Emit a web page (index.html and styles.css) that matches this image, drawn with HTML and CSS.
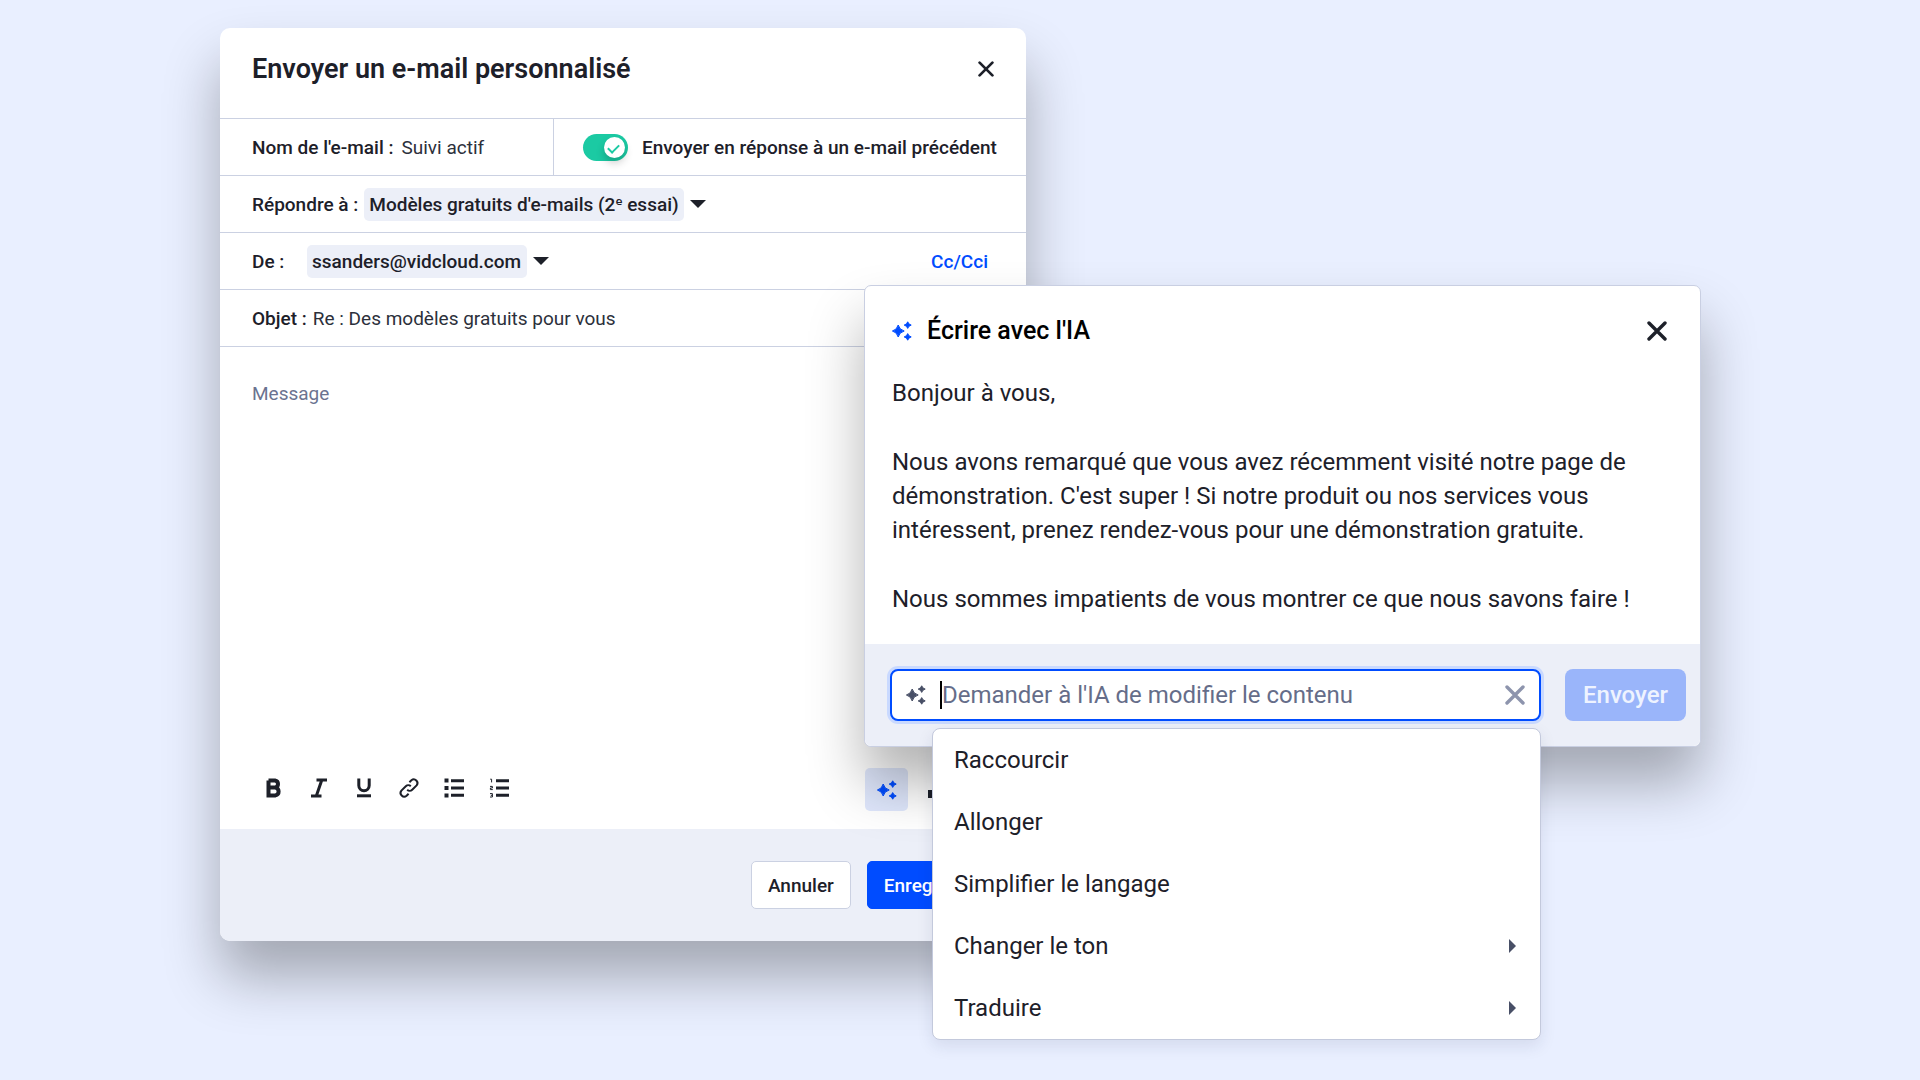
FILE: index.html
```
<!DOCTYPE html>
<html lang="fr">
  <head>
    <meta charset="UTF-8">
    <meta name="viewport" content="width=device-width, initial-scale=1">
    <title>Envoyer un e-mail personnalisé</title>
    <link rel="stylesheet" href="styles.css">
  </head>
  <body>
    <!-- shared icons -->
    <svg class="sprite" aria-hidden="true">
      <symbol id="sparkles" viewBox="0 0 20 20">
        <path d="M6.2 4 Q7.4 8.8 12.2 10 Q7.4 11.2 6.2 16 Q5 11.2 0.4 10 Q5 8.8 6.2 4Z"/>
        <path d="M15.7 0.8 Q16.4 3.4 19.2 4.1 Q16.4 4.8 15.7 7.4 Q15 4.8 12.2 4.1 Q15 3.4 15.7 0.8Z"/>
        <path d="M15.7 12.6 Q16.4 15.2 19.2 15.9 Q16.4 16.6 15.7 19.2 Q15 16.6 12.2 15.9 Q15 15.2 15.7 12.6Z"/>
      </symbol>
      <symbol id="cross" viewBox="0 0 20 20">
        <path d="M2 2L18 18M18 2L2 18"/>
      </symbol>
    </svg>

    <main class="stage">
      <form class="dialog">
        <header class="dialog-head">
          <h1 class="dialog-title">Envoyer un e-mail personnalisé</h1>
          <button type="button" class="icon-button" aria-label="Fermer"><svg class="cross cross-sm"><use href="#cross"/></svg></button>
        </header>

        <div class="row row-split">
          <div class="cell">
            <label class="label" for="mail-name">Nom de l'e-mail :</label>
            <input class="field" id="mail-name" type="text" value="Suivi actif">
          </div>
          <div class="cell cell-switch">
            <input class="switch" id="as-reply" type="checkbox" checked>
            <label class="label" for="as-reply">Envoyer en réponse à un e-mail précédent</label>
          </div>
        </div>
        <div class="row">
          <label class="label" for="reply-to">Répondre à :</label>
          <select class="chip" id="reply-to"><option>Modèles gratuits d'e-mails (2ᵉ essai)</option></select>
          <span class="caret"></span>
        </div>
        <div class="row">
          <label class="label label-from" for="from">De :</label>
          <select class="chip" id="from"><option>ssanders@vidcloud.com</option></select>
          <span class="caret"></span>
          <a class="cc-link" href="#">Cc/Cci</a>
        </div>
        <div class="row">
          <label class="label" for="subject">Objet :</label>
          <input class="field" id="subject" type="text" value="Re : Des modèles gratuits pour vous">
        </div>

        <textarea class="message" placeholder="Message" aria-label="Message"></textarea>

        <div class="toolbar">
          <button type="button" class="tool" aria-label="Gras">
            <svg viewBox="0 0 20 20"><path class="w4" d="M4.5 2.5H11A3.6 3.6 0 0 1 11 9.6H4.5M4.5 9.6H11.5A4 4 0 0 1 11.5 17.4H4.5V2.5"/></svg>
          </button>
          <button type="button" class="tool" aria-label="Italique">
            <svg viewBox="0 0 20 20"><path class="w3" d="M7.5 2H18M2 18H12.5M12.8 2L7.3 18"/></svg>
          </button>
          <button type="button" class="tool" aria-label="Souligné">
            <svg viewBox="0 0 20 20"><path class="w3" d="M4.8 0.5V7.5A5.2 5.2 0 0 0 15.2 7.5V0.5"/><path class="w3" d="M3 17.8H17"/></svg>
          </button>
          <button type="button" class="tool" aria-label="Lien">
            <svg viewBox="0 0 20 20"><path class="w2" d="M8.2 11.8A3.6 3.6 0 0 0 13.2 11.8L17.6 7.4A3.7 3.7 0 0 0 12.4 2.2L10.4 4.2M11.8 8.2A3.6 3.6 0 0 0 6.8 8.2L2.4 12.6A3.7 3.7 0 0 0 7.6 17.8L9.6 15.8"/></svg>
          </button>
          <button type="button" class="tool" aria-label="Liste à puces">
            <svg viewBox="0 0 20 20"><path class="w3" d="M7 2.8H20M7 10H20M7 17.2H20"/><path class="w4" d="M0.5 2.4H4.5M0.5 10H4.5M0.5 17.4H4.5"/></svg>
          </button>
          <button type="button" class="tool" aria-label="Liste numérotée">
            <svg viewBox="0 0 20 20"><path class="w3" d="M7 2.8H20M7 10H20M7 17.2H20"/><path class="w1" d="M1.2 1.2H2.6V4.4M1 8.4H3.4V10H1.4V11.6H3.8M1 15.6H3.4V19H1M1.8 17.3H3.4"/></svg>
          </button>
          <button type="button" class="tool tool-ai" aria-label="Écrire avec l'IA"><svg class="sparkles"><use href="#sparkles"/></svg></button>
          <button type="button" class="tool tool-chart" aria-label="Statistiques">
            <svg viewBox="0 0 20 20"><path class="w4" d="M2 12V20M10 7V20M18 2V20"/></svg>
          </button>
        </div>

        <footer class="dialog-foot">
          <button type="button" class="button">Annuler</button>
          <button type="submit" class="button button-primary">Enregistrer</button>
        </footer>
      </form>

      <section class="ai">
        <header class="ai-head">
          <svg class="sparkles"><use href="#sparkles"/></svg>
          <h2 class="ai-title">Écrire avec l'IA</h2>
          <button type="button" class="icon-button" aria-label="Fermer"><svg class="cross"><use href="#cross"/></svg></button>
        </header>
        <div class="ai-text">
          <p>Bonjour à vous,</p>
          <p>Nous avons remarqué que vous avez récemment visité notre page de<br>démonstration. C'est super ! Si notre produit ou nos services vous<br>intéressent, prenez rendez-vous pour une démonstration gratuite.</p>
          <p>Nous sommes impatients de vous montrer ce que nous savons faire !</p>
        </div>
        <footer class="ai-foot">
          <div class="prompt">
            <svg class="sparkles"><use href="#sparkles"/></svg>
            <span class="text-cursor"></span>
            <input class="prompt-input" type="text" placeholder="Demander à l'IA de modifier le contenu" aria-label="Demander à l'IA de modifier le contenu">
            <button type="button" class="icon-button" aria-label="Effacer"><svg class="cross"><use href="#cross"/></svg></button>
            <div class="menu">
              <button type="button" class="menu-item">Raccourcir</button>
              <button type="button" class="menu-item">Allonger</button>
              <button type="button" class="menu-item">Simplifier le langage</button>
              <button type="button" class="menu-item has-sub">Changer le ton</button>
              <button type="button" class="menu-item has-sub">Traduire</button>
            </div>
          </div>
          <button type="button" class="send" disabled>Envoyer</button>
        </footer>
      </section>
    </main>
  </body>
</html>
```
FILE: styles.css
```
* {
  box-sizing:border-box;
}
body {
  margin:0;
  min-height:100vh;
  background-color:#e9efff;
  font-family:Roboto, "Noto Sans", sans-serif;
  font-size:19px;
  color:#1d2029;
}
button, input, select, textarea {
  font:inherit;
  color:inherit;
  border:0;
  margin:0;
  padding:0;
  background:none;
}
button {
  cursor:pointer;
}
h1, h2, p {
  margin:0;
}
.sprite {
  position:absolute;
  width:0;
  height:0;
}
/* the two windows share the middle column, the second one on top */
.stage {
  display:grid;
  grid-template-columns:220fr 644fr 162fr 675fr 219fr;
  align-items:start;
  padding:28px 0;
}

/* mail dialog */
.dialog {
  grid-column:2 / 4;
  grid-row:1;
  border-radius:10px;
  background-color:#fff;
  box-shadow:0 36px 56px rgba(0,0,0,0.3);
}
.dialog-head {
  display:flex;
  align-items:center;
  justify-content:space-between;
  height:90px;
  padding:0 32px 8px;
}
.dialog-title {
  font-size:27px;
  font-weight:600;
}
.icon-button {
  display:flex;
}
.cross {
  width:20px;
  height:20px;
  stroke:currentColor;
  stroke-width:3.4;
  stroke-linecap:round;
}
.cross-sm {
  width:16px;
  height:16px;
}
.row {
  display:flex;
  align-items:center;
  gap:6px;
  height:57px;
  padding:0 38px 0 32px;
  border-top:1px solid #cbd1e2;
}
.row-split {
  display:grid;
  grid-template-columns:333fr 473fr;
  gap:0;
  padding:0;
}
.cell {
  display:flex;
  align-items:center;
  gap:8px;
  height:100%;
  min-width:0;
  padding-left:32px;
}
.cell-switch {
  gap:14px;
  padding-left:29px;
  border-left:1px solid #cbd1e2;
}
.label {
  font-weight:500;
  white-space:nowrap;
}
.label-from {
  width:49px;
}
.field {
  flex:1;
  min-width:0;
  color:#2c303b;
}
.switch {
  appearance:none;
  position:relative;
  flex:none;
  width:45px;
  height:27px;
  border-radius:14px;
  background-color:#1bcaa3;
}
.switch::before {
  content:"";
  position:absolute;
  top:3px;
  right:3px;
  width:21px;
  height:21px;
  border-radius:50%;
  background-color:#fff;
  box-shadow:0 5px 8px rgba(0,0,0,0.2);
}
.switch::after {
  content:"";
  position:absolute;
  top:10px;
  right:9px;
  width:9px;
  height:5px;
  border-left:2px solid #1bcaa3;
  border-bottom:2px solid #1bcaa3;
  transform:rotate(-45deg);
}
.chip {
  appearance:none;
  height:33px;
  padding:0 5px;
  border-radius:5px;
  background-color:#eceff8;
  font-weight:500;
}
.caret {
  border:8px solid transparent;
  border-top-color:#1d2029;
  border-bottom:0;
}
.cc-link {
  margin-left:auto;
  color:#004cff;
  font-weight:500;
  text-decoration:none;
}
.message {
  display:block;
  width:100%;
  height:400px;
  padding:35px 32px;
  border-top:1px solid #cbd1e2;
  resize:none;
}
.message::placeholder {
  color:#6b7390;
  opacity:1;
}
.toolbar {
  display:flex;
  align-items:center;
  gap:25px;
  height:83px;
  padding:0 44px;
}
.tool {
  display:flex;
  align-items:center;
  justify-content:center;
}
.tool svg {
  width:20px;
  height:20px;
  overflow:visible;
  fill:none;
  stroke:#1d2029;
}
.w1 {
  stroke-width:1;
}
.w2 {
  stroke-width:2;
}
.w3 {
  stroke-width:3;
}
.w4 {
  stroke-width:4;
}
.tool-ai {
  width:43px;
  height:43px;
  margin-top:4px;
  margin-left:auto;
  border-radius:5px;
  background-color:#dfe7fc;
}
.sparkles {
  width:20px;
  height:20px;
  fill:#004cff;
  stroke:#004cff;
  stroke-linejoin:round;
}
.tool-ai .sparkles {
  fill:#004cff;
  stroke:#004cff;
}
.tool-chart {
  margin-right:34px;
  margin-left:-5px;
}
.dialog-foot {
  display:flex;
  align-items:center;
  justify-content:flex-end;
  gap:16px;
  height:112px;
  padding:0 32px;
  border-radius:0 0 10px 10px;
  background-color:#eceff8;
}
.button {
  height:48px;
  padding:0 16px;
  border:1px solid #cbd1e2;
  border-radius:5px;
  background-color:#fff;
  font-weight:500;
}
.button-primary {
  border-color:#004cff;
  background-color:#004cff;
  color:#fff;
}

/* AI window */
.ai {
  grid-column:3 / 5;
  grid-row:1;
  z-index:1;
  margin-top:257px;
  border:1px solid #c9cfe2;
  border-radius:7px;
  background-color:#fff;
  box-shadow:0 36px 56px rgba(0,0,0,0.3);
}
.ai-head {
  display:flex;
  align-items:center;
  gap:15px;
  padding:28px 33px 0 27px;
}
.ai-title {
  flex:1;
  color:#000;
  font-size:25px;
  font-weight:500;
  line-height:34px;
}
.ai-text {
  padding:28px 27px;
  font-size:24px;
  line-height:34px;
}
.ai-text p + p {
  margin-top:35px;
}
.ai-foot {
  display:flex;
  gap:24px;
  padding:25px 14px 25px 25px;
  border-radius:0 0 7px 7px;
  background-color:#eceff8;
}
.prompt {
  display:flex;
  align-items:center;
  position:relative;
  flex:1;
  min-width:0;
  height:52px;
  padding:0 14px;
  border:2px solid #004cff;
  border-radius:8px;
  background-color:#fff;
  box-shadow:0 0 0 3px #c9d9ff;
}
.prompt .sparkles {
  flex:none;
  fill:#484f66;
  stroke:#484f66;
}
.text-cursor {
  flex:none;
  width:2px;
  height:28px;
  margin-left:14px;
  background-color:#000;
}
.prompt-input {
  flex:1;
  min-width:0;
  outline:0;
  font-size:24px;
}
.prompt-input::placeholder {
  color:#656d89;
  opacity:1;
}
.prompt .cross {
  color:#8d94ad;
}
.send {
  flex:none;
  height:52px;
  padding:0 18px;
  border-radius:8px;
  background-color:#9ab5fa;
  color:#eef3ff;
  font-size:24px;
  font-weight:500;
}
.menu {
  position:absolute;
  top:57px;
  left:40px;
  right:-2px;
  border:1px solid #c3c9dc;
  border-radius:8px;
  background-color:#fff;
  box-shadow:0 6px 16px rgba(30,40,80,0.1);
}
.menu-item {
  display:flex;
  align-items:center;
  justify-content:space-between;
  width:100%;
  height:62px;
  padding:0 24px 0 21px;
  font-size:24px;
}
.has-sub::after {
  content:"";
  border:7px solid transparent;
  border-left-color:#484f66;
  border-right:0;
}
```
